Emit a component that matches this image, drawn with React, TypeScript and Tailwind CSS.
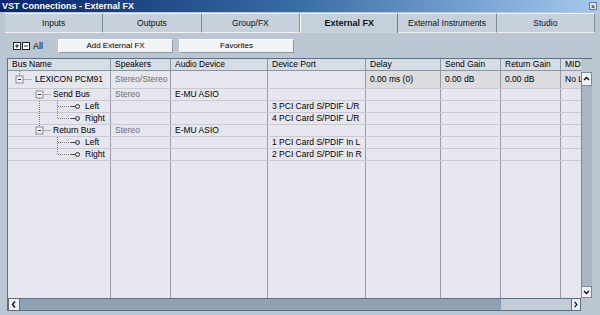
import React from 'react';

const font = { fontFamily: '"Liberation Sans", Arial, sans-serif' };

const cols = ['w-[103px]', 'w-[60px]', 'w-[97px]', 'w-[98px]', 'w-[75px]', 'w-[60px]', 'w-[60px]', 'w-[20px]'];
const headers = ['Bus Name', 'Speakers', 'Audio Device', 'Device Port', 'Delay', 'Send Gain', 'Return Gain', 'MIDI De'];

const tabs = ['Inputs', 'Outputs', 'Group/FX', 'External FX', 'External Instruments', 'Studio'];

type Tree = 'root' | 'send' | 'sendChild' | 'sendLast' | 'ret' | 'retChild' | 'retLast';

interface RowData {
  tree: Tree;
  name: string;
  speakers?: string;
  device?: string;
  port?: string;
  rest?: string[];
}

const rows: RowData[] = [
  { tree: 'root', name: 'LEXICON PCM91', speakers: 'Stereo/Stereo', rest: ['0.00 ms (0)', '0.00 dB', '0.00 dB', 'No L'] },
  { tree: 'send', name: 'Send Bus', speakers: 'Stereo', device: 'E-MU ASIO' },
  { tree: 'sendChild', name: 'Left', port: '3 PCI Card S/PDIF L/R' },
  { tree: 'sendLast', name: 'Right', port: '4 PCI Card S/PDIF L/R' },
  { tree: 'ret', name: 'Return Bus', speakers: 'Stereo', device: 'E-MU ASIO' },
  { tree: 'retChild', name: 'Left', port: '1 PCI Card S/PDIF In L' },
  { tree: 'retLast', name: 'Right', port: '2 PCI Card S/PDIF In R' },
];

const dot = { stroke: '#7c7c84', strokeWidth: 1, strokeDasharray: '1 1', fill: 'none' };

function MinusBox({ cx, cy }: { cx: number; cy: number }) {
  return (
    <g>
      <rect x={cx - 3.5} y={cy - 3.5} width={7} height={7} fill="#f4f4f8" stroke="#8a8a92" strokeWidth={1} />
      <line x1={cx - 1.5} y1={cy} x2={cx + 1.5} y2={cy} stroke="#333" strokeWidth={1} />
    </g>
  );
}

function TreeLines({ tree, h }: { tree: Tree; h: number }) {
  const c = Math.floor(h / 2) + 0.5;
  if (tree === 'root') {
    return (
      <svg width={26} height={h} className="shrink-0">
        <line x1={11.5} y1={0} x2={11.5} y2={c - 3.5} {...dot} />
        <MinusBox cx={11.5} cy={c} />
        <line x1={15.5} y1={c} x2={24} y2={c} {...dot} />
      </svg>
    );
  }
  if (tree === 'send' || tree === 'ret') {
    return (
      <svg width={44} height={h} className="shrink-0">
        {tree === 'send' ? (
          <line x1={31.5} y1={c + 3.5} x2={31.5} y2={h + 1} {...dot} />
        ) : (
          <line x1={31.5} y1={0} x2={31.5} y2={c - 3.5} {...dot} />
        )}
        <MinusBox cx={31.5} cy={c} />
        <line x1={35.5} y1={c} x2={43} y2={c} {...dot} />
      </svg>
    );
  }
  const last = tree === 'sendLast' || tree === 'retLast';
  const outer = tree === 'sendChild' || tree === 'sendLast';
  return (
    <svg width={76} height={h} className="shrink-0">
      {outer && <line x1={31.5} y1={0} x2={31.5} y2={h + 1} {...dot} />}
      <line x1={49.5} y1={0} x2={49.5} y2={last ? c : h + 1} {...dot} />
      <line x1={50} y1={c} x2={67} y2={c} {...dot} />
      <line x1={63} y1={c} x2={67.5} y2={c} stroke="#444" strokeWidth={1} />
      <circle cx={69.5} cy={c} r={2} fill="none" stroke="#333" strokeWidth={1} />
    </svg>
  );
}

function Row({ r }: { r: RowData }) {
  const h = r.tree === 'root' ? 18 : 12;
  const rest = r.rest ?? ['', '', '', ''];
  const cells = [r.speakers ?? '', r.device ?? '', r.port ?? '', ...rest];
  return (
    <div className={`flex ${r.tree === 'root' ? 'h-[18px]' : 'h-[12px]'} border-b border-[#c9c9d2]`}>
      <div className={`${cols[0]} shrink-0 flex items-center border-r border-[#9a9aa4] overflow-hidden text-black`}>
        <TreeLines tree={r.tree} h={h - 1} />
        <span className="whitespace-nowrap pl-[1px]">{r.name}</span>
      </div>
      {cells.map((t, i) => (
        <div
          key={i}
          className={`${cols[i + 1]} shrink-0 flex items-center pl-[4px] whitespace-nowrap overflow-hidden border-r border-[#9a9aa4] ${
            r.tree === 'root' && i >= 3 ? 'bg-[#dcdcdf]' : ''
          } ${i < 1 ? 'text-[#6d6d75]' : 'text-black'} ${i === 6 ? 'border-r-0' : ''}`}
        >
          {t}
        </div>
      ))}
    </div>
  );
}

function Arrow({ d }: { d: 'up' | 'down' | 'left' | 'right' }) {
  const paths = {
    up: 'M2 5 L4.5 2.5 L7 5',
    down: 'M2 3 L4.5 5.5 L7 3',
    left: 'M5 1.5 L2.5 4.5 L5 7.5',
    right: 'M3 1.5 L5.5 4.5 L3 7.5',
  };
  return (
    <svg width={9} height={9} viewBox="0 0 9 9">
      <path d={paths[d]} fill="none" stroke="#111" strokeWidth={1.4} />
    </svg>
  );
}

export default function App() {
  return (
    <div style={font} className="w-[600px] h-[315px] bg-[#bac7d3] flex flex-col overflow-hidden text-[8.5px] leading-none select-none">
      {/* title bar */}
      <div className="h-[12px] shrink-0 flex items-center justify-between bg-gradient-to-r from-[#0a246a] via-[#3a6ea5] to-[#a6caf0] pl-[2px] pr-[3px]">
        <span className="text-white font-bold text-[9px]">VST Connections - External FX</span>
        <div className="w-[8px] h-[8px] bg-[#dfe4ea] border border-[#6a7a8a] flex items-center justify-center text-[7px] text-black">
          ×
        </div>
      </div>

      {/* tabs */}
      <div className="h-[20px] mt-[1px] mx-[5px] grid grid-cols-6 shrink-0 text-[8.5px]">
        {tabs.map((t) => {
          const active = t === 'External FX';
          return (
            <div
              key={t}
              className={`flex items-center justify-center text-[#111] border-t border-[#eef2f5] ${
                active
                  ? 'font-bold bg-[#c4d0da] border-l border-l-white border-r border-r-[#6b7b89] text-[9px]'
                  : 'bg-[#c6d1db] border-r border-r-[#7f8d9a] border-b border-b-[#eef2f5]'
              }`}
            >
              {t}
            </div>
          );
        })}
      </div>

      {/* toolbar */}
      <div className="h-[25px] shrink-0 flex items-center pl-[13px] pt-[1px]">
        <div className="flex items-center gap-[1px]">
          <svg width={8} height={8} viewBox="0 0 8 8">
            <rect x={0.5} y={0.5} width={7} height={7} fill="#fff" stroke="#222" />
            <line x1={2} y1={4} x2={6} y2={4} stroke="#222" />
            <line x1={4} y1={2} x2={4} y2={6} stroke="#222" />
          </svg>
          <svg width={8} height={8} viewBox="0 0 8 8">
            <rect x={0.5} y={0.5} width={7} height={7} fill="#fff" stroke="#222" />
            <line x1={2} y1={4} x2={6} y2={4} stroke="#222" />
          </svg>
        </div>
        <span className="ml-[3px] text-black text-[9px]">All</span>
        <button className="ml-[15px] w-[115px] h-[14px] bg-[#f2f3f5] border border-[#8d9aa6] border-t-white border-l-white text-black text-[8px] flex items-center justify-center">
          Add External FX
        </button>
        <button className="ml-[6px] w-[115px] h-[14px] bg-[#f2f3f5] border border-[#8d9aa6] border-t-white border-l-white text-black text-[8px] flex items-center justify-center">
          Favorites
        </button>
      </div>

      {/* table */}
      <div className="ml-[7px] mr-[8px] h-[253px] shrink-0 flex flex-col border-l border-t border-[#5e7182]">
        <div className="flex flex-1 min-h-0">
          <div className="w-[573px] shrink-0 flex flex-col bg-[#e6e6ee] overflow-hidden">
            {/* header */}
            <div className="flex h-[12px] shrink-0 bg-[#d6dde4] border-b border-[#8a96a2]">
              {headers.map((t, i) => (
                <div
                  key={t}
                  className={`${cols[i]} shrink-0 flex items-center pl-[4px] whitespace-nowrap overflow-hidden text-black ${
                    i < 7 ? 'border-r border-[#8a96a2]' : ''
                  }`}
                >
                  {t}
                </div>
              ))}
            </div>
            {rows.map((r, i) => (
              <Row key={i} r={r} />
            ))}
            <div className="flex flex-1">
              {cols.map((c, i) => (
                <div key={i} className={`${c} shrink-0 ${i < 7 ? 'border-r border-[#9a9aa4]' : ''}`} />
              ))}
            </div>
          </div>
          {/* vertical scrollbar */}
          <div className="w-[11px] shrink-0 flex flex-col">
            <div className="h-[13px] bg-[#bac7d3]" />
            <div className="h-[14px] bg-[#eef0f3] border border-[#7d8b98] flex items-center justify-center">
              <Arrow d="up" />
            </div>
            <div className="flex-1 bg-[#a6b6c4] border-l border-[#7d8b98]" />
            <div className="h-[12px] bg-[#eef0f3] border border-[#7d8b98] flex items-center justify-center">
              <Arrow d="down" />
            </div>
          </div>
        </div>
        {/* horizontal scrollbar */}
        <div className="h-[13px] shrink-0 flex">
          <div className="w-[12px] bg-[#eef0f3] border border-[#5e7182] flex items-center justify-center">
            <Arrow d="left" />
          </div>
          <div className="w-[481px] bg-[#8fa2b4] border-y border-[#5e7182]" />
          <div className="w-[70px] bg-[#c3cdd7] border-y border-[#5e7182]" />
          <div className="w-[10px] bg-[#eef0f3] border border-[#5e7182] flex items-center justify-center">
            <Arrow d="right" />
          </div>
          <div className="flex-1 bg-[#bac7d3]" />
        </div>
      </div>
    </div>
  );
}
